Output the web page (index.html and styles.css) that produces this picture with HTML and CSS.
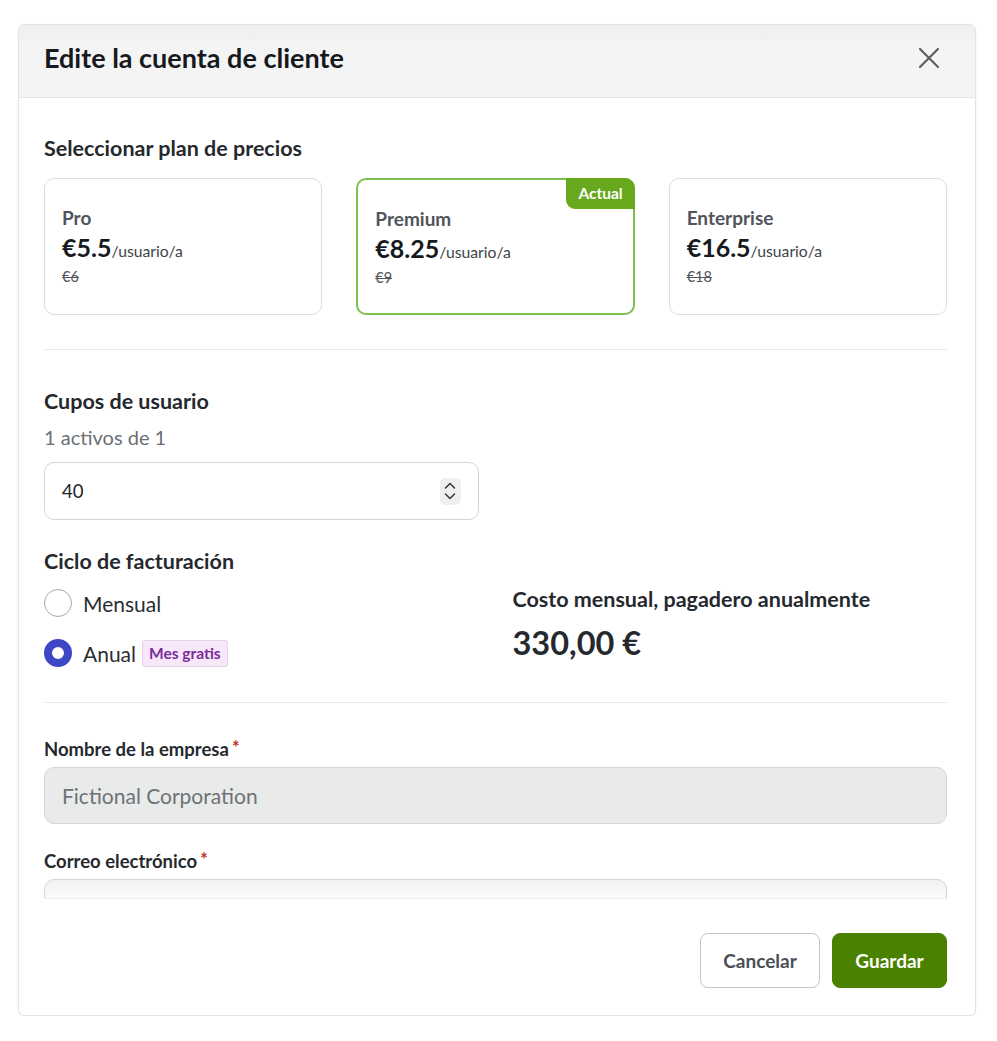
FILE: index.html
```html
<!DOCTYPE html>
<html lang="es">
<head>
<meta charset="utf-8">
<title>Edite la cuenta de cliente</title>
<link rel="stylesheet" href="styles.css">
</head>
<body>
<div class="modal">
  <div class="modal-header">
    <h1 class="modal-title">Edite la cuenta de cliente</h1>
    <button class="close-btn" aria-label="Cerrar">
      <svg width="24" height="24" viewBox="0 0 24 24"><path d="M3 3L21 21M21 3L3 21" stroke="#5b5f64" stroke-width="2.2" stroke-linecap="round" fill="none"/></svg>
    </button>
  </div>
  <div class="modal-body">
    <h2 class="section-title">Seleccionar plan de precios</h2>
    <div class="plans">
      <div class="plan">
        <div class="plan-name">Pro</div>
        <div class="plan-price"><span class="amount">€5.5</span><span class="unit">/usuario/a</span></div>
        <div class="plan-old">€6</div>
      </div>
      <div class="plan plan-current">
        <span class="badge-current">Actual</span>
        <div class="plan-name">Premium</div>
        <div class="plan-price"><span class="amount">€8.25</span><span class="unit">/usuario/a</span></div>
        <div class="plan-old">€9</div>
      </div>
      <div class="plan">
        <div class="plan-name">Enterprise</div>
        <div class="plan-price"><span class="amount">€16.5</span><span class="unit">/usuario/a</span></div>
        <div class="plan-old">€18</div>
      </div>
    </div>
    <hr class="divider divider-plans">
    <h2 class="section-title seats-title">Cupos de usuario</h2>
    <div class="muted">1 activos de 1</div>
    <div class="grid-2">
      <div class="number-input">
        <span class="number-value">40</span>
        <span class="spinner">
          <svg width="14" height="22" viewBox="0 0 14 22"><path d="M2.5 8L7 3.5L11.5 8M2.5 14L7 18.5L11.5 14" stroke="#3a3e43" stroke-width="1.6" fill="none" stroke-linecap="round" stroke-linejoin="round"/></svg>
        </span>
      </div>
    </div>
    <div class="grid-2 billing">
      <div class="billing-left">
        <h2 class="section-title">Ciclo de facturación</h2>
        <div class="radios">
          <label class="radio-row"><span class="radio"></span><span class="radio-label">Mensual</span></label>
          <label class="radio-row"><span class="radio radio-on"></span><span class="radio-label">Anual</span><span class="tag-free">Mes gratis</span></label>
        </div>
      </div>
      <div class="cost">
        <div class="cost-label">Costo mensual, pagadero anualmente</div>
        <div class="cost-value">330,00 €</div>
      </div>
    </div>
    <hr class="divider divider-billing">
    <div class="field">
      <div class="field-label">Nombre de la empresa<span class="req">*</span></div>
      <div class="text-input disabled">Fictional Corporation</div>
    </div>
    <div class="field">
      <div class="field-label">Correo electrónico<span class="req">*</span></div>
      <div class="text-input email"><span class="email-text">admin@fictionalcorporation.example.com</span></div>
    </div>
  </div>
  <div class="modal-footer">
    <button class="btn btn-secondary">Cancelar</button>
    <button class="btn btn-primary">Guardar</button>
  </div>
</div>
</body>
</html>
```

FILE: styles.css
```css
* { box-sizing: border-box; }
html, body { margin: 0; padding: 0; background: #ffffff; }
body {
  font-family: "Lato", "Liberation Sans", sans-serif;
  color: #1f2328;
  padding: 24px 21px 0 18px;
}
.modal {
  width: 958px;
  border: 1px solid #e3e3e3;
  border-radius: 6px;
  background: #fff;
  box-shadow: 0 1px 3px rgba(0,0,0,0.05);
  overflow: hidden;
}
.modal-header {
  height: 73px;
  background: linear-gradient(#eeeeee, #f4f4f4 30%);
  border-bottom: 1px solid #e6e6e6;
  display: flex;
  align-items: center;
  justify-content: space-between;
  padding: 0 34px 6px 25px;
}
.modal-title {
  margin: 0;
  font-size: 27px;
  font-weight: 700;
  color: #16191d;
  line-height: 32px;
}
.close-btn {
  border: 0;
  background: transparent;
  padding: 0;
  width: 24px;
  height: 24px;
  display: flex;
  cursor: pointer;
}
.modal-body {
  height: 801px;
  overflow: hidden;
  margin: 0 28px 0 25px;
  padding-top: 36px;
  border-bottom: 1px solid #ececec;
}
.section-title {
  margin: 0;
  font-size: 21.5px;
  line-height: 28px;
  font-weight: 700;
  color: #25292e;
}
.plans {
  margin-top: 16px;
  display: grid;
  grid-template-columns: repeat(3, 1fr);
  gap: 34px;
}
.plan {
  position: relative;
  height: 137px;
  border: 1.5px solid #dcdcdc;
  border-radius: 10px;
  padding: 27px 17px;
  display: flex;
  flex-direction: column;
}
.plan-current {
  border: 2px solid #7fbf4d;
}
.badge-current {
  position: absolute;
  top: -2px;
  right: -2px;
  background: #68a81c;
  color: #fff;
  font-weight: 700;
  font-size: 15.5px;
  line-height: 31px;
  padding: 0 12px;
  border-radius: 0 10px 0 9px;
}
.plan-name {
  font-size: 19px;
  line-height: 24px;
  font-weight: 700;
  color: #50555b;
}
.plan-price {
  line-height: 32px;
  margin-top: 1px;
  color: #16191d;
}
.plan-price .amount {
  font-size: 25px;
  font-weight: 700;
}
.plan-price .unit {
  font-size: 15.7px;
  color: #3e4348;
}
.plan-old {
  font-size: 14.5px;
  line-height: 20px;
  text-decoration: line-through;
  color: #50555b;
}
.divider {
  border: 0;
  border-top: 1px solid #e8e8e8;
  margin: 0;
}
.divider-plans { margin-top: 34px; }
.seats-title { margin-top: 37px; }
.muted {
  margin-top: 9px;
  font-size: 20px;
  line-height: 26px;
  color: #6b7075;
}
.grid-2 {
  display: grid;
  grid-template-columns: 1fr 1fr;
  gap: 34px;
}
.number-input {
  margin-top: 12px;
  height: 58px;
  border: 1.5px solid #d4d4d4;
  border-radius: 10px;
  display: flex;
  align-items: center;
  justify-content: space-between;
  padding: 0 17px;
}
.number-value {
  font-size: 18.5px;
  color: #1f2328;
}
.spinner {
  width: 21px;
  height: 27px;
  background: #efefef;
  border-radius: 5px;
  display: flex;
  align-items: center;
  justify-content: center;
}
.billing { margin-top: 27px; }
.radios {
  margin-top: 14px;
  display: flex;
  flex-direction: column;
  gap: 22px;
}
.radio-row {
  display: flex;
  align-items: center;
  height: 28px;
}
.radio {
  width: 28px;
  height: 28px;
  border-radius: 50%;
  border: 1.5px solid #a8a8a8;
  background: #fff;
  flex: none;
}
.radio-on {
  border: 8px solid #3d46c4;
}
.radio-label {
  margin-left: 11px;
  font-size: 21px;
  color: #2a2e33;
}
.tag-free {
  margin-left: 6px;
  background: #f6e8f8;
  border: 1px solid #ebcdf0;
  color: #7a2c9a;
  font-weight: 700;
  font-size: 15.5px;
  line-height: 25px;
  padding: 0 6px;
  border-radius: 3px;
}
.cost {
  align-self: end;
  padding-bottom: 2px;
}
.cost-label {
  font-size: 21.5px;
  line-height: 28px;
  font-weight: 700;
  color: #25292e;
}
.cost-value {
  margin-top: 8px;
  font-size: 32.5px;
  line-height: 44px;
  font-weight: 700;
  color: #25292e;
}
.divider-billing { margin-top: 35px; }
.field { margin-top: 23px; }
.divider-billing + .field { margin-top: 32px; }
.field-label {
  font-size: 18.5px;
  line-height: 24px;
  font-weight: 700;
  color: #25292e;
}
.req {
  color: #c4302b;
  margin-left: 3px;
  font-size: 18px;
  vertical-align: 2px;
}
.text-input {
  margin-top: 6px;
  height: 57px;
  border: 1.5px solid #d6d6d6;
  border-radius: 10px;
  display: flex;
  align-items: center;
  padding: 0 17px;
  font-size: 21px;
}
.text-input.disabled {
  background: #e9eaea;
  color: #6e7377;
}
.text-input.email {
  background: linear-gradient(#f1f1f1, #ffffff 50%);
  color: #3a3e43;
  align-items: flex-start;
  padding-top: 16px;
}
.modal-footer {
  height: 116px;
  display: flex;
  justify-content: flex-end;
  align-items: flex-start;
  gap: 12px;
  padding: 34px 28px 0 0;
}
.btn {
  height: 55px;
  border-radius: 8px;
  font-family: inherit;
  font-size: 19px;
  font-weight: 700;
  cursor: pointer;
}
.btn-secondary {
  width: 120px;
  background: #fff;
  border: 1.5px solid #c3c3c8;
  color: #4a4f55;
}
.btn-primary {
  width: 115px;
  background: #4a8200;
  border: 1px solid #4a8200;
  color: #fff;
}
```
